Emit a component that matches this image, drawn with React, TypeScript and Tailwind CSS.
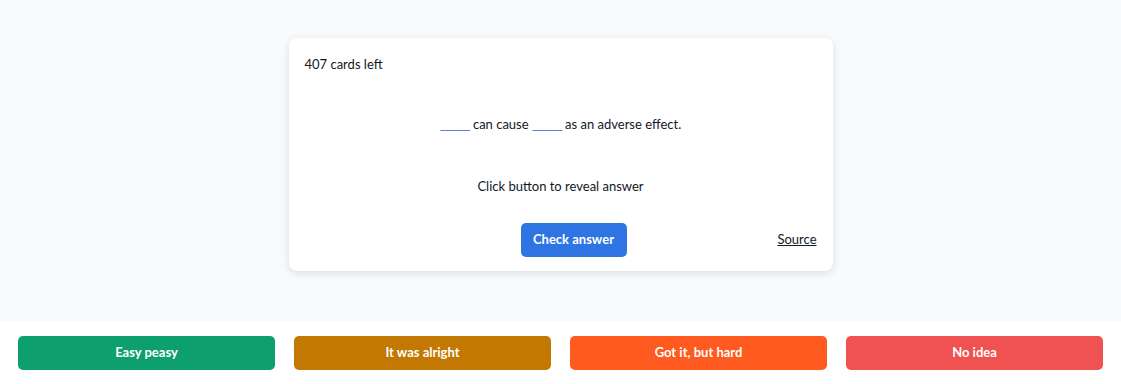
export default function App() {
  const buttons = [
    { label: 'Easy peasy', color: 'bg-[#0e9f6e]' },
    { label: 'It was alright', color: 'bg-[#c27803]' },
    { label: 'Got it, but hard', color: 'bg-[#ff5a1f]' },
    { label: 'No idea', color: 'bg-[#f05252]' },
  ];

  return (
    <div className="flex h-[384px] flex-col bg-white font-['Lato',sans-serif] text-[13px] text-[#111827]">
      {/* Card area */}
      <main className="flex flex-1 justify-center bg-[#f9fafb] pt-[38px]">
        <div className="flex h-[233px] w-[544px] flex-col rounded-lg bg-white px-4 pt-4 pb-[14px] shadow-[0_2px_8px_rgba(0,0,0,0.12)]">
          <p className="leading-5">407 cards left</p>
          <p className="mt-10 text-center leading-5">
            <span className="tracking-[-1px] text-[#3b6fd8]">______</span> can cause{' '}
            <span className="tracking-[-1px] text-[#3b6fd8]">______</span> as an adverse effect.
          </p>
          <p className="mt-[42px] text-center leading-5">Click button to reveal answer</p>
          <div className="mt-[27px] flex items-center">
            <button className="ml-[216px] h-[34px] w-[106px] rounded-[5px] bg-[#2f74e3] font-bold text-white">
              Check answer
            </button>
            <a href="#" className="ml-auto underline">
              Source
            </a>
          </div>
        </div>
      </main>

      {/* Rating buttons */}
      <div className="grid h-[63px] grid-cols-4 gap-[19px] px-[18px] pt-[15px] pb-[14px]">
        {buttons.map((b) => (
          <button
            key={b.label}
            className={`${b.color} h-[34px] rounded-[5px] font-bold text-white`}
          >
            {b.label}
          </button>
        ))}
      </div>
    </div>
  );
}
